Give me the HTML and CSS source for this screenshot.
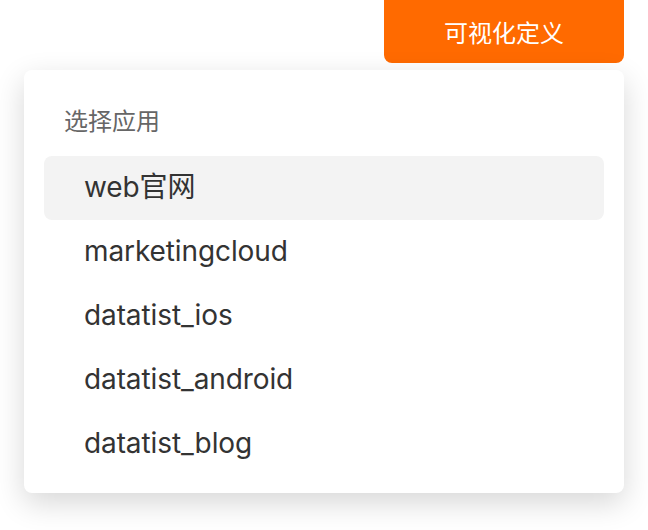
FILE: index.html
```html
<!DOCTYPE html>
<html lang="zh">
<head>
<meta charset="utf-8">
<link rel="stylesheet" href="styles.css">
</head>
<body>
<div class="wrap">
  <div class="bar">
    <button class="btn">可视化定义</button>
  </div>
  <div class="panel">
    <div class="title">选择应用</div>
    <ul class="list">
      <li class="item active">web官网</li>
      <li class="item">marketingcloud</li>
      <li class="item">datatist_ios</li>
      <li class="item">datatist_android</li>
      <li class="item">datatist_blog</li>
    </ul>
  </div>
</div>
</body>
</html>
```
FILE: styles.css
```css
html, body {
  margin: 0;
  padding: 0;
  background: #fff;
}
body {
  font-family: Inter, "Noto Sans CJK SC", sans-serif;
  color: #333;
}
.wrap {
  width: 648px;
  min-height: 530px;
  padding: 0 24px 37px;
  box-sizing: border-box;
  display: flex;
  flex-direction: column;
  gap: 7px;
}
.bar {
  display: flex;
  justify-content: flex-end;
}
.btn {
  width: 240px;
  height: 63px;
  border: none;
  border-radius: 0 0 8px 8px;
  background: #ff6a00;
  color: #fff;
  font-family: Inter, "Noto Sans CJK SC", sans-serif;
  font-size: 24px;
  padding: 0;
}
.panel {
  background: #fff;
  border-radius: 8px;
  box-shadow: 0 10px 30px rgba(0,0,0,0.16);
  padding: 36px 20px 17px;
}
.title {
  font-size: 24px;
  line-height: 32px;
  color: #666;
  padding-left: 20px;
  margin-bottom: 18px;
}
.list {
  list-style: none;
  margin: 0;
  padding: 0;
}
.item {
  height: 64px;
  line-height: 62px;
  padding-left: 40px;
  font-size: 28px;
  letter-spacing: -0.1px;
  color: #333;
  border-radius: 8px;
}
.item.active {
  background: #f3f3f3;
}
```
